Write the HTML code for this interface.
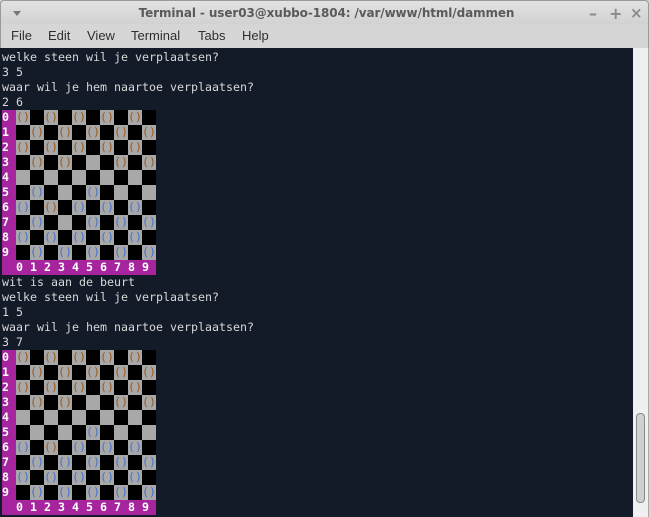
<!DOCTYPE html>
<html><head><meta charset="utf-8"><style>
*{margin:0;padding:0;box-sizing:border-box}
body{width:649px;height:517px;overflow:hidden;background:#d4d4d4;position:relative;font-family:"Liberation Sans","DejaVu Sans",sans-serif}
#title{position:absolute;left:0;top:0;width:649px;height:24px;background:linear-gradient(#e2e2e2,#d2d2d2);border:1px solid #9a9a9a;border-bottom:none;border-radius:4px 4px 0 0}
#title .t{position:absolute;left:0;right:0;top:5px;text-align:center;font-weight:bold;font-size:12px;color:#5a5a5a;font-family:"DejaVu Sans",sans-serif;letter-spacing:-0.1px;padding-left:4px}
#title .arr{position:absolute;left:12px;top:10px;width:0;height:0;border-left:4px solid transparent;border-right:4px solid transparent;border-top:5px solid #777}
#title .btn{position:absolute;top:3px;font-size:16px;color:#8a8a8a;font-weight:bold;font-family:"DejaVu Sans",sans-serif}
#menu{position:absolute;left:0;top:24px;width:649px;height:24px;background:#d6d6d6;border-left:1px solid #9a9a9a;border-right:1px solid #9a9a9a}
#menu span{position:absolute;top:4px;font-size:13px;color:#2e2e2e;font-family:"Liberation Sans",sans-serif}
#term{position:absolute;left:0;top:48px;width:633px;height:469px;background:#131a28;padding:2px 0 0 2px;font-family:"DejaVu Sans Mono",monospace;font-size:11.63px;color:#d8d8d8}
.l{height:15px;line-height:15px;white-space:pre}
.l span{display:inline-block;height:15px;width:14px;vertical-align:top;text-align:left}
.p{background:#a6259f;color:#fff;font-weight:bold}
.nr{background:#a6259f;color:#fff;font-weight:bold;width:154px;height:15px;white-space:pre}
.k{background:#000}
.g{background:#a8a8a8}
.o{color:#9a5a1a}
.u{color:#3f73d0}
#sb{position:absolute;left:633px;top:48px;width:16px;height:469px;background:#f0f0f0;border-right:1px solid #aaa}
#th{position:absolute;left:636px;top:413px;width:9px;height:90px;background:#d0d0d0;border:1px solid #8a8a8a;border-radius:4px}
</style></head><body>
<div id="title"><div class="arr"></div><div class="t">Terminal - user03@xubbo-1804: /var/www/html/dammen</div>
<span class="btn" style="left:588px">–</span><span class="btn" style="left:608px">+</span><span class="btn" style="left:629px;font-size:15px">×</span></div>
<div id="menu"><span style="left:10px">File</span><span style="left:47px">Edit</span><span style="left:86px">View</span><span style="left:130px">Terminal</span><span style="left:197px">Tabs</span><span style="left:241px">Help</span></div>
<div id="term">
<div class="l">welke steen wil je verplaatsen?</div>
<div class="l">3 5</div>
<div class="l">waar wil je hem naartoe verplaatsen?</div>
<div class="l">2 6</div>
<div class="l"><span class="p">0</span><span class="g o">()</span><span class="k"></span><span class="g o">()</span><span class="k"></span><span class="g o">()</span><span class="k"></span><span class="g o">()</span><span class="k"></span><span class="g o">()</span><span class="k"></span></div>
<div class="l"><span class="p">1</span><span class="k"></span><span class="g o">()</span><span class="k"></span><span class="g o">()</span><span class="k"></span><span class="g o">()</span><span class="k"></span><span class="g o">()</span><span class="k"></span><span class="g o">()</span></div>
<div class="l"><span class="p">2</span><span class="g o">()</span><span class="k"></span><span class="g o">()</span><span class="k"></span><span class="g o">()</span><span class="k"></span><span class="g o">()</span><span class="k"></span><span class="g o">()</span><span class="k"></span></div>
<div class="l"><span class="p">3</span><span class="k"></span><span class="g o">()</span><span class="k"></span><span class="g o">()</span><span class="k"></span><span class="g"></span><span class="k"></span><span class="g o">()</span><span class="k"></span><span class="g o">()</span></div>
<div class="l"><span class="p">4</span><span class="g"></span><span class="k"></span><span class="g"></span><span class="k"></span><span class="g"></span><span class="k"></span><span class="g"></span><span class="k"></span><span class="g"></span><span class="k"></span></div>
<div class="l"><span class="p">5</span><span class="k"></span><span class="g u">()</span><span class="k"></span><span class="g"></span><span class="k"></span><span class="g u">()</span><span class="k"></span><span class="g"></span><span class="k"></span><span class="g"></span></div>
<div class="l"><span class="p">6</span><span class="g u">()</span><span class="k"></span><span class="g o">()</span><span class="k"></span><span class="g u">()</span><span class="k"></span><span class="g u">()</span><span class="k"></span><span class="g u">()</span><span class="k"></span></div>
<div class="l"><span class="p">7</span><span class="k"></span><span class="g u">()</span><span class="k"></span><span class="g"></span><span class="k"></span><span class="g u">()</span><span class="k"></span><span class="g u">()</span><span class="k"></span><span class="g u">()</span></div>
<div class="l"><span class="p">8</span><span class="g u">()</span><span class="k"></span><span class="g u">()</span><span class="k"></span><span class="g u">()</span><span class="k"></span><span class="g u">()</span><span class="k"></span><span class="g u">()</span><span class="k"></span></div>
<div class="l"><span class="p">9</span><span class="k"></span><span class="g u">()</span><span class="k"></span><span class="g u">()</span><span class="k"></span><span class="g u">()</span><span class="k"></span><span class="g u">()</span><span class="k"></span><span class="g u">()</span></div>
<div class="l"><div class="nr">  0 1 2 3 4 5 6 7 8 9 </div></div>
<div class="l">wit is aan de beurt</div>
<div class="l">welke steen wil je verplaatsen?</div>
<div class="l">1 5</div>
<div class="l">waar wil je hem naartoe verplaatsen?</div>
<div class="l">3 7</div>
<div class="l"><span class="p">0</span><span class="g o">()</span><span class="k"></span><span class="g o">()</span><span class="k"></span><span class="g o">()</span><span class="k"></span><span class="g o">()</span><span class="k"></span><span class="g o">()</span><span class="k"></span></div>
<div class="l"><span class="p">1</span><span class="k"></span><span class="g o">()</span><span class="k"></span><span class="g o">()</span><span class="k"></span><span class="g o">()</span><span class="k"></span><span class="g o">()</span><span class="k"></span><span class="g o">()</span></div>
<div class="l"><span class="p">2</span><span class="g o">()</span><span class="k"></span><span class="g o">()</span><span class="k"></span><span class="g o">()</span><span class="k"></span><span class="g o">()</span><span class="k"></span><span class="g o">()</span><span class="k"></span></div>
<div class="l"><span class="p">3</span><span class="k"></span><span class="g o">()</span><span class="k"></span><span class="g o">()</span><span class="k"></span><span class="g"></span><span class="k"></span><span class="g o">()</span><span class="k"></span><span class="g o">()</span></div>
<div class="l"><span class="p">4</span><span class="g"></span><span class="k"></span><span class="g"></span><span class="k"></span><span class="g"></span><span class="k"></span><span class="g"></span><span class="k"></span><span class="g"></span><span class="k"></span></div>
<div class="l"><span class="p">5</span><span class="k"></span><span class="g"></span><span class="k"></span><span class="g"></span><span class="k"></span><span class="g u">()</span><span class="k"></span><span class="g"></span><span class="k"></span><span class="g"></span></div>
<div class="l"><span class="p">6</span><span class="g u">()</span><span class="k"></span><span class="g o">()</span><span class="k"></span><span class="g u">()</span><span class="k"></span><span class="g u">()</span><span class="k"></span><span class="g u">()</span><span class="k"></span></div>
<div class="l"><span class="p">7</span><span class="k"></span><span class="g u">()</span><span class="k"></span><span class="g u">()</span><span class="k"></span><span class="g u">()</span><span class="k"></span><span class="g u">()</span><span class="k"></span><span class="g u">()</span></div>
<div class="l"><span class="p">8</span><span class="g u">()</span><span class="k"></span><span class="g u">()</span><span class="k"></span><span class="g u">()</span><span class="k"></span><span class="g u">()</span><span class="k"></span><span class="g u">()</span><span class="k"></span></div>
<div class="l"><span class="p">9</span><span class="k"></span><span class="g u">()</span><span class="k"></span><span class="g u">()</span><span class="k"></span><span class="g u">()</span><span class="k"></span><span class="g u">()</span><span class="k"></span><span class="g u">()</span></div>
<div class="l"><div class="nr">  0 1 2 3 4 5 6 7 8 9 </div></div>
</div>
<div id="sb"></div><div id="th"></div>
</body></html>
